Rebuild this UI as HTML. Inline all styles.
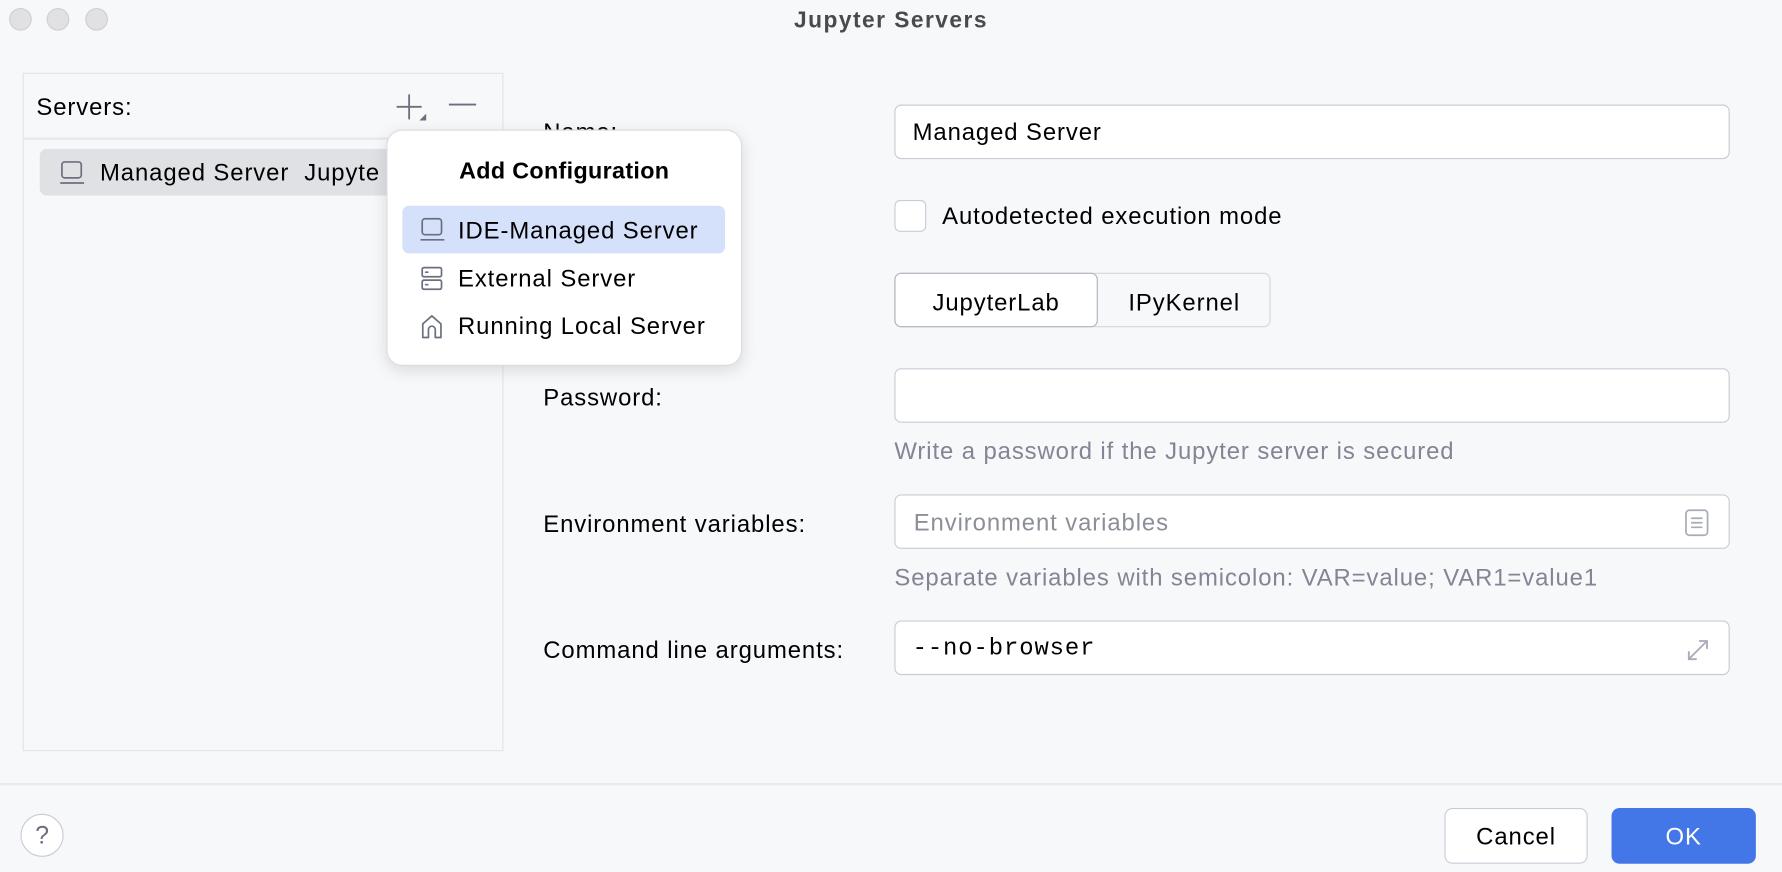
<!DOCTYPE html>
<html><head><meta charset="utf-8"><style>
html,body{margin:0;padding:0;width:1782px;height:872px;overflow:hidden;background:#f7f8fa;}
#w{position:absolute;left:0;top:0;width:1568px;height:767px;transform:scale(1.13648);transform-origin:0 0;font-family:"Liberation Sans",sans-serif;font-size:21px;letter-spacing:0.8px;color:#000;}
.a{position:absolute;}
.t{position:absolute;white-space:nowrap;line-height:1;}
.inp{position:absolute;background:#fff;border:1.5px solid #c9ccd6;border-radius:6px;box-sizing:border-box;}
.dot{position:absolute;width:20px;height:20px;border-radius:50%;background:#e1e1e3;border:1px solid #cfcfd2;box-sizing:border-box;top:7px;}
</style></head><body><div id="w">
<div class="dot" style="left:8px"></div><div class="dot" style="left:41px"></div><div class="dot" style="left:75px"></div>
<div class="t" style="left:0;width:1568px;text-align:center;top:8px;font-weight:bold;color:#4a4a4d;font-size:20px;letter-spacing:1.3px">Jupyter Servers</div>

<div class="a" style="left:20px;top:64px;width:423px;height:597px;border:1.5px solid #e3e4e8;box-sizing:border-box"></div>
<div class="a" style="left:21px;top:121px;width:421px;height:2px;background:#e6e7eb"></div>
<div class="t" style="left:32px;top:84px">Servers:</div>
<svg class="a" style="left:346px;top:80px" width="34" height="30"><path d="M14 3v22M3 14h22" stroke="#6c707e" stroke-width="1.6"/><path d="M29 20v6h-6z" fill="#6c707e"/></svg>
<svg class="a" style="left:393px;top:80px" width="30" height="30"><path d="M2 12h24" stroke="#6c707e" stroke-width="1.6"/></svg>
<div class="a" style="left:35px;top:131px;width:330px;height:41px;background:#dfe1e5;border-radius:6px"></div>
<svg class="a" style="left:52px;top:140px" width="24" height="24"><rect x="2.5" y="2.5" width="17" height="14" rx="2.5" fill="none" stroke="#6c707e" stroke-width="1.5"/><path d="M1 21h21" stroke="#6c707e" stroke-width="1.5"/></svg>
<div class="t" style="left:88px;top:142px">Managed Server&nbsp;&nbsp;Jupyte</div>

<div class="t" style="left:478px;top:106px">Name:</div>
<div class="t" style="left:478px;top:340px">Password:</div>
<div class="t" style="left:478px;top:451px">Environment variables:</div>
<div class="t" style="left:478px;top:562px">Command line arguments:</div>

<div class="inp" style="left:787px;top:92px;width:735px;height:48px"></div>
<div class="t" style="left:803px;top:106px">Managed Server</div>
<div class="inp" style="left:787px;top:176px;width:28px;height:28px;border-radius:5px"></div>
<div class="t" style="left:829px;top:180px">Autodetected execution mode</div>
<div class="a" style="left:787px;top:240px;width:331px;height:48px;border:1.5px solid #d3d5db;border-radius:6px;box-sizing:border-box"></div>
<div class="inp" style="left:787px;top:240px;width:179px;height:48px;border-color:#afb3bf"></div>
<div class="t" style="left:787px;width:179px;text-align:center;top:256px">JupyterLab</div>
<div class="t" style="left:966px;width:152px;text-align:center;top:256px">IPyKernel</div>
<div class="inp" style="left:787px;top:324px;width:735px;height:48px"></div>
<div class="t" style="left:787px;top:387px;color:#818594">Write a password if the Jupyter server is secured</div>
<div class="inp" style="left:787px;top:435px;width:735px;height:48px"></div>
<div class="t" style="left:804px;top:450px;color:#8c8f99">Environment variables</div>
<svg class="a" style="left:1481px;top:447px" width="24" height="26"><rect x="2.5" y="2" width="19" height="22" rx="3" fill="none" stroke="#a8abb8" stroke-width="1.5"/><path d="M7 9h10M7 13h10M7 17h10" stroke="#a8abb8" stroke-width="1.5"/></svg>
<div class="t" style="left:787px;top:498px;color:#818594">Separate variables with semicolon: VAR=value; VAR1=value1</div>
<div class="inp" style="left:787px;top:546px;width:735px;height:48px"></div>
<div class="t" style="left:803px;top:561px;font-family:'Liberation Mono',monospace;font-size:21px;letter-spacing:0.8px">--no-browser</div>
<svg class="a" style="left:1480px;top:558px" width="28" height="28"><path d="M6 22L22 6M15 6h7v7M6 15v7h7" fill="none" stroke="#a8abb8" stroke-width="1.6"/></svg>

<div class="a" style="left:340px;top:114px;width:313px;height:208px;background:#fff;border-radius:14px;border:1px solid #dcdde2;box-sizing:border-box;box-shadow:0 4px 14px rgba(0,0,0,0.12)"></div>
<div class="t" style="left:340px;width:313px;text-align:center;top:141px;font-weight:bold;letter-spacing:0.3px;font-size:20.5px">Add Configuration</div>
<div class="a" style="left:354px;top:181px;width:284px;height:42px;background:#d5e0fb;border-radius:6px"></div>
<svg class="a" style="left:369px;top:190px" width="24" height="24"><rect x="2.5" y="2.5" width="17" height="14" rx="2.5" fill="none" stroke="#6c707e" stroke-width="1.5"/><path d="M1 21h21" stroke="#6c707e" stroke-width="1.5"/></svg>
<div class="t" style="left:403px;top:193px">IDE-Managed Server</div>
<svg class="a" style="left:369px;top:233px" width="24" height="26"><rect x="2.5" y="2.5" width="17" height="8" rx="1.5" fill="none" stroke="#6c707e" stroke-width="1.5"/><rect x="2.5" y="13.5" width="17" height="8" rx="1.5" fill="none" stroke="#6c707e" stroke-width="1.5"/><path d="M5 6.5h3M5 17.5h3" stroke="#6c707e" stroke-width="1.5"/></svg>
<div class="t" style="left:403px;top:235px">External Server</div>
<svg class="a" style="left:369px;top:275px" width="24" height="26"><path d="M3 22V10L11 3l8 7v12h-5v-7a3 3 0 0 0-6 0v7z" fill="none" stroke="#6c707e" stroke-width="1.5" stroke-linejoin="round"/></svg>
<div class="t" style="left:403px;top:277px">Running Local Server</div>

<div class="a" style="left:0;top:689px;width:1568px;height:2px;background:#e8e9ec"></div>
<div class="a" style="left:18px;top:716px;width:38px;height:38px;border-radius:50%;background:#fff;border:1.5px solid #c9ccd6;box-sizing:border-box"></div>
<div class="t" style="left:18px;width:38px;text-align:center;top:724px;color:#6c707e;font-size:22px;letter-spacing:0">?</div>
<div class="inp" style="left:1271px;top:711px;width:126px;height:49px;border-radius:7px"></div>
<div class="t" style="left:1271px;width:126px;text-align:center;top:726px">Cancel</div>
<div class="a" style="left:1418px;top:711px;width:127px;height:49px;border-radius:7px;background:#4377e8"></div>
<div class="t" style="left:1418px;width:127px;text-align:center;top:726px;color:#fff">OK</div>
</div></body></html>
